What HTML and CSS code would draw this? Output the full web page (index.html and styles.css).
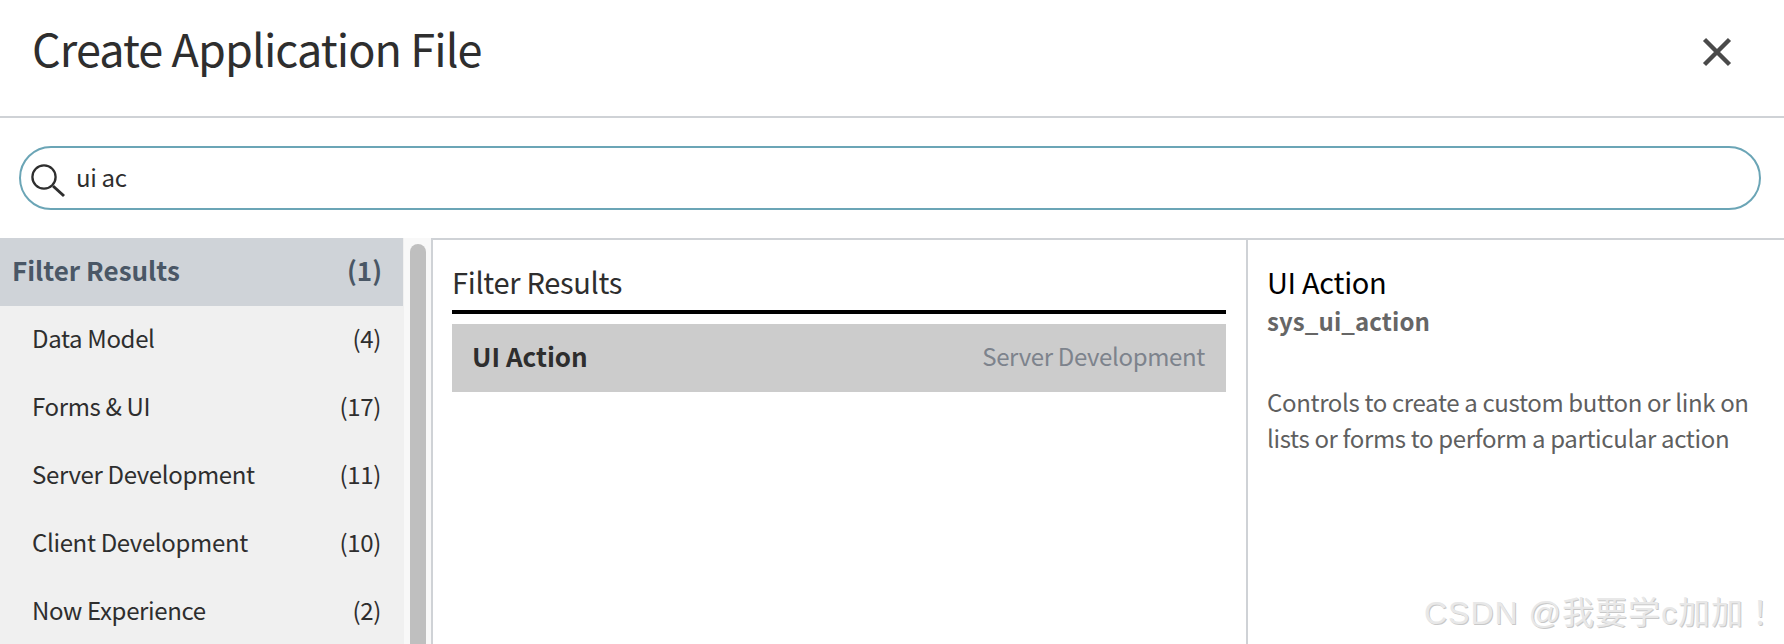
FILE: index.html
```html
<!DOCTYPE html>
<html lang="en">
<head>
  <meta charset="UTF-8">
  <title>Create Application File</title>
  <link rel="stylesheet" href="styles.css">
</head>
<body>

<div class="header">
  <h1>Create Application File</h1>
  <svg class="close" width="30" height="30" viewBox="0 0 30 30">
    <path d="M2.5 2.5 L27.5 27.5 M27.5 2.5 L2.5 27.5" stroke="#4a4a4a" stroke-width="4.4" fill="none"/>
  </svg>
</div>

<div class="search">
  <svg class="search-icon" width="36" height="36" viewBox="0 0 36 36">
    <circle cx="13" cy="13" r="11.6" stroke="#2e2e2e" stroke-width="2.3" fill="none"/>
    <path d="M22 22 L33 32" stroke="#2e2e2e" stroke-width="3" fill="none"/>
  </svg>
  <span class="search-text">ui ac</span>
</div>

<div class="panels">
  <div class="sidebar">
    <div class="filter-head"><span>Filter Results</span><span>(1)</span></div>
    <div class="filter-row"><span>Data Model</span><span>(4)</span></div>
    <div class="filter-row"><span>Forms &amp; UI</span><span>(17)</span></div>
    <div class="filter-row"><span>Server Development</span><span>(11)</span></div>
    <div class="filter-row"><span>Client Development</span><span>(10)</span></div>
    <div class="filter-row"><span>Now Experience</span><span>(2)</span></div>
  </div>
  <div class="scroll-track"><div class="scroll-thumb"></div></div>
  <div class="content">
    <div class="results">
      <h2>Filter Results</h2>
      <div class="result-row">
        <span class="result-name">UI Action</span>
        <span class="result-cat">Server Development</span>
      </div>
    </div>
    <div class="detail">
      <h3>UI Action</h3>
      <div class="detail-table">sys_ui_action</div>
      <p>Controls to create a custom button or link on lists or forms to perform a particular action</p>
    </div>
  </div>
</div>

<div class="watermark">CSDN @我要学c加加！</div>

</body>
</html>
```

FILE: styles.css
```css
html, body {
  margin: 0;
  height: 644px;
  overflow: hidden;
}
body {
  position: relative;
  background: #fff;
  color: #2e2e2e;
  font-family: "Noto Sans CJK SC", "Noto Sans", sans-serif;
  font-size: 24px;
  letter-spacing: -0.35px;
}
.header {
  display: flex;
  align-items: center;
  justify-content: space-between;
  box-sizing: border-box;
  height: 118px;
  padding: 0 52px 12px 32px;
  border-bottom: 2px solid #cfd2d6;
}
h1 {
  margin: 0 0 9px;
  font-size: 45px;
  font-weight: 400;
  letter-spacing: -0.9px;
  line-height: 50px;
}
.search {
  display: flex;
  align-items: center;
  box-sizing: border-box;
  height: 64px;
  margin: 28px 23px 28px 19px;
  padding-left: 10px;
  border: 2px solid #6ba5b6;
  border-radius: 32px;
}
.search-icon {
  flex: none;
  margin-top: 8px;
}
.search-text {
  margin-left: 9px;
  padding-bottom: 2px;
  line-height: 30px;
}
.panels {
  display: flex;
  height: 406px;
}
.sidebar {
  flex: none;
  width: 404px;
  background: #f0f0f0;
}
.filter-head, .filter-row {
  display: flex;
  align-items: center;
  justify-content: space-between;
  box-sizing: border-box;
  height: 68px;
  padding-bottom: 4px;
  line-height: 30px;
}
.filter-head {
  width: 403px;
  padding-left: 12px;
  padding-right: 21px;
  background: #cfd3d8;
  color: #4a5766;
  font-size: 26px;
  font-weight: 700;
  letter-spacing: 0;
}
.filter-row {
  padding-left: 32px;
  padding-right: 23px;
}
.scroll-track {
  flex: none;
  width: 27px;
  box-sizing: border-box;
  padding: 6px 5px 0 6px;
  background: #f8f8f8;
}
.scroll-thumb {
  height: 100%;
  border-radius: 8px 8px 0 0;
  background: #bfbfbf;
}
.content {
  flex: 1;
  display: flex;
  border-top: 2px solid #cfd2d6;
  border-left: 2px solid #cfd2d6;
}
.results {
  flex: none;
  width: 815px;
  box-sizing: border-box;
  padding: 0 20px 0 19px;
  border-right: 2px solid #cfd2d6;
}
h2 {
  margin: 0 0 10px;
  height: 74px;
  box-sizing: border-box;
  padding-top: 22px;
  border-bottom: 4px solid #000;
  font-size: 29px;
  font-weight: 400;
  letter-spacing: -0.3px;
  line-height: 38px;
}
.result-row {
  display: flex;
  align-items: center;
  justify-content: space-between;
  height: 68px;
  box-sizing: border-box;
  padding: 0 21px 4px 20px;
  background: #ccc;
  line-height: 30px;
}
.result-name {
  font-size: 26px;
  font-weight: 700;
  letter-spacing: 0;
}
.result-cat {
  color: #7d838c;
}
.detail {
  flex: 1;
  padding: 22px 20px 0 19px;
}
h3 {
  margin: 0;
  color: #000;
  font-size: 29px;
  font-weight: 400;
  letter-spacing: -0.3px;
  line-height: 38px;
}
.detail-table {
  margin-top: 3px;
  color: #666;
  font-weight: 700;
  letter-spacing: 0.1px;
  line-height: 36px;
}
p {
  margin: 45px 0 0;
  color: #5f5f5f;
  line-height: 36px;
}
.watermark {
  position: absolute;
  right: 7px;
  bottom: 13px;
  color: #e8e8e8;
  font-family: "Liberation Sans", "Noto Sans CJK TC", sans-serif;
  font-size: 32px;
  font-weight: 400;
  letter-spacing: 1px;
  line-height: 36px;
  text-shadow: 1px 1px 0 #c8c8c8;
}
```
